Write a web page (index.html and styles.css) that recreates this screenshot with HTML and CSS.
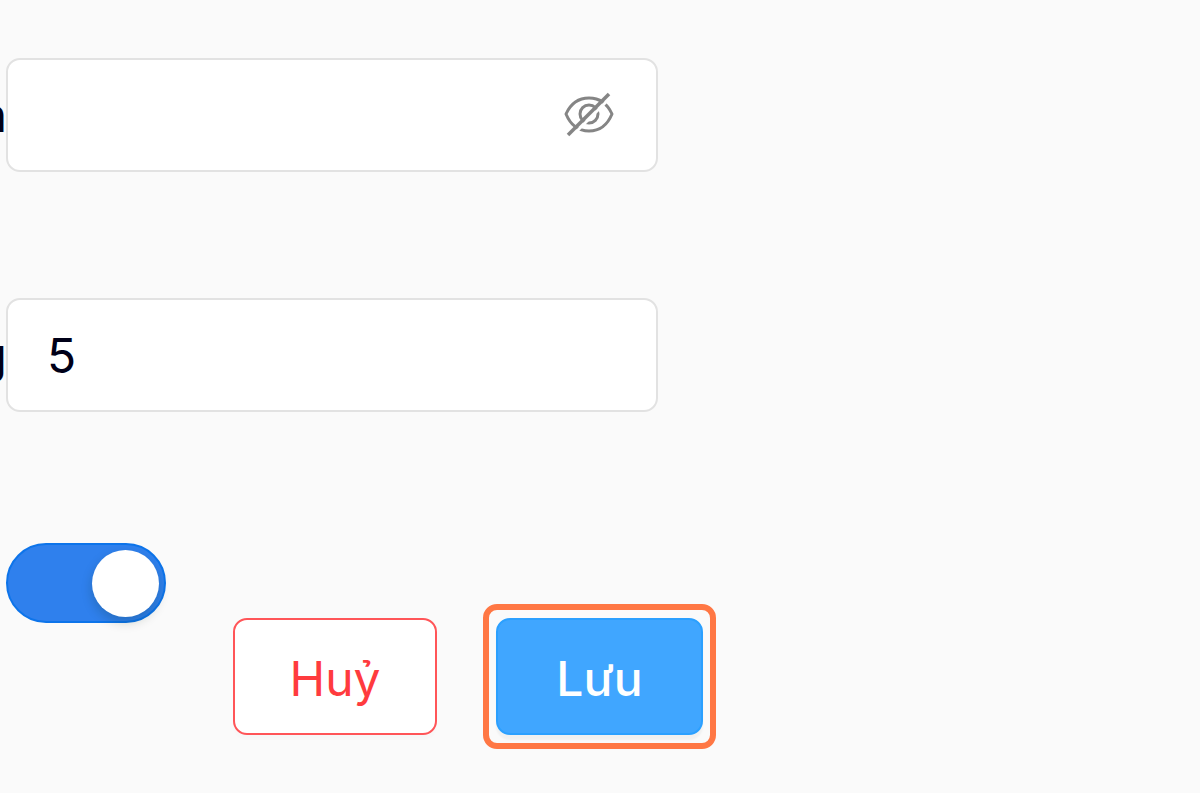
FILE: index.html
```
<!DOCTYPE html>
<html lang="vi">
<head>
<meta charset="utf-8">
<meta name="viewport" content="width=device-width, initial-scale=1">
<title>Form</title>
<link rel="stylesheet" href="styles.css">
</head>
<body>
<form class="form">
  <div class="row">
    <label class="label" for="secret">n</label>
    <div class="field">
      <input class="input" id="secret" type="password">
      <button class="reveal" type="button" aria-labelledby="secret">
        <svg width="52" height="48" viewBox="0 0 52 48" fill="none" stroke="#858585" stroke-width="3">
          <path d="M3 23C8 12 16 7 26 7S44 12 49 23C44 35 36 40 26 40S8 35 3 23Z" stroke-linejoin="round"/>
          <circle cx="26" cy="23" r="9"/>
          <path d="M8 46L48 6" stroke="#fff" stroke-width="3"/>
          <path d="M5 44L46 3" stroke-width="3.5"/>
        </svg>
      </button>
    </div>
  </div>
  <div class="row">
    <label class="label" for="count">g</label>
    <div class="field">
      <input class="input" id="count" type="text" value="5">
    </div>
  </div>
  <div class="footer">
    <input class="switch" type="checkbox" role="switch" checked>
    <div class="actions">
      <button class="button cancel" type="button">Huỷ</button>
      <div class="highlight">
        <button class="button save" type="submit">Lưu</button>
      </div>
    </div>
  </div>
</form>
</body>
</html>
```
FILE: styles.css
```
* { box-sizing: border-box; }

body {
  margin: 0;
  background: #fafafa;
  color: #000018;
  font-family: Inter, "Liberation Sans", sans-serif;
  font-size: 48px;
  overflow-x: hidden;
}

.form {
  max-width: 720px;
  padding-top: 58px;
}

.row {
  display: flex;
  align-items: center;
  max-width: 658px;
  margin-bottom: 126px;
}

.label {
  display: flex;
  justify-content: flex-end;
  flex: none;
  width: 7px;
  margin-right: -1px;
  line-height: 60px;
  overflow: hidden;
}

.field {
  display: flex;
  align-items: center;
  flex: 1;
  min-width: 0;
  height: 114px;
  padding: 0 41px 0 39px;
  background: #fff;
  border: 2px solid #e2e2e2;
  border-radius: 14px;
}

.input {
  flex: 1;
  min-width: 0;
  padding: 0;
  border: 0;
  outline: 0;
  background: transparent;
  color: inherit;
  font: inherit;
}

.reveal {
  display: flex;
  padding: 0;
  border: 0;
  background: none;
}

.footer {
  display: flex;
  align-items: flex-start;
  justify-content: space-between;
  padding: 5px 4px 0 6px;
}

.switch {
  appearance: none;
  display: flex;
  justify-content: flex-end;
  align-items: center;
  width: 160px;
  height: 80px;
  margin: 0;
  padding: 4px 5px;
  border: 2px solid #0d74ea;
  border-radius: 40px;
  background: #2f80ed;
}

.switch::before {
  content: "";
  width: 67px;
  height: 67px;
  border-radius: 50%;
  background: #fff;
  box-shadow: 0 5px 12px rgba(0, 35, 11, 0.2);
}

.actions {
  display: flex;
  align-items: center;
  gap: 46px;
  padding-top: 61px;
}

.button {
  height: 117px;
  min-width: 204px;
  padding: 3px 48px 0;
  border: 2px solid;
  border-radius: 14px;
  font: inherit;
  white-space: nowrap;
}

.cancel {
  background: #fff;
  border-color: #ff5558;
  color: #ff3b3e;
  box-shadow: 0 5px 2px rgba(0, 0, 0, 0.01);
}

.highlight {
  padding: 8px 7px;
  border: 6px solid #ff7744;
  border-radius: 14px;
}

.save {
  display: block;
  min-width: 207px;
  background: #40a6ff;
  border-color: #2ba0ff;
  color: #fff;
  font-weight: 500;
  box-shadow: 0 5px 2px rgba(0, 0, 0, 0.04);
}
```
